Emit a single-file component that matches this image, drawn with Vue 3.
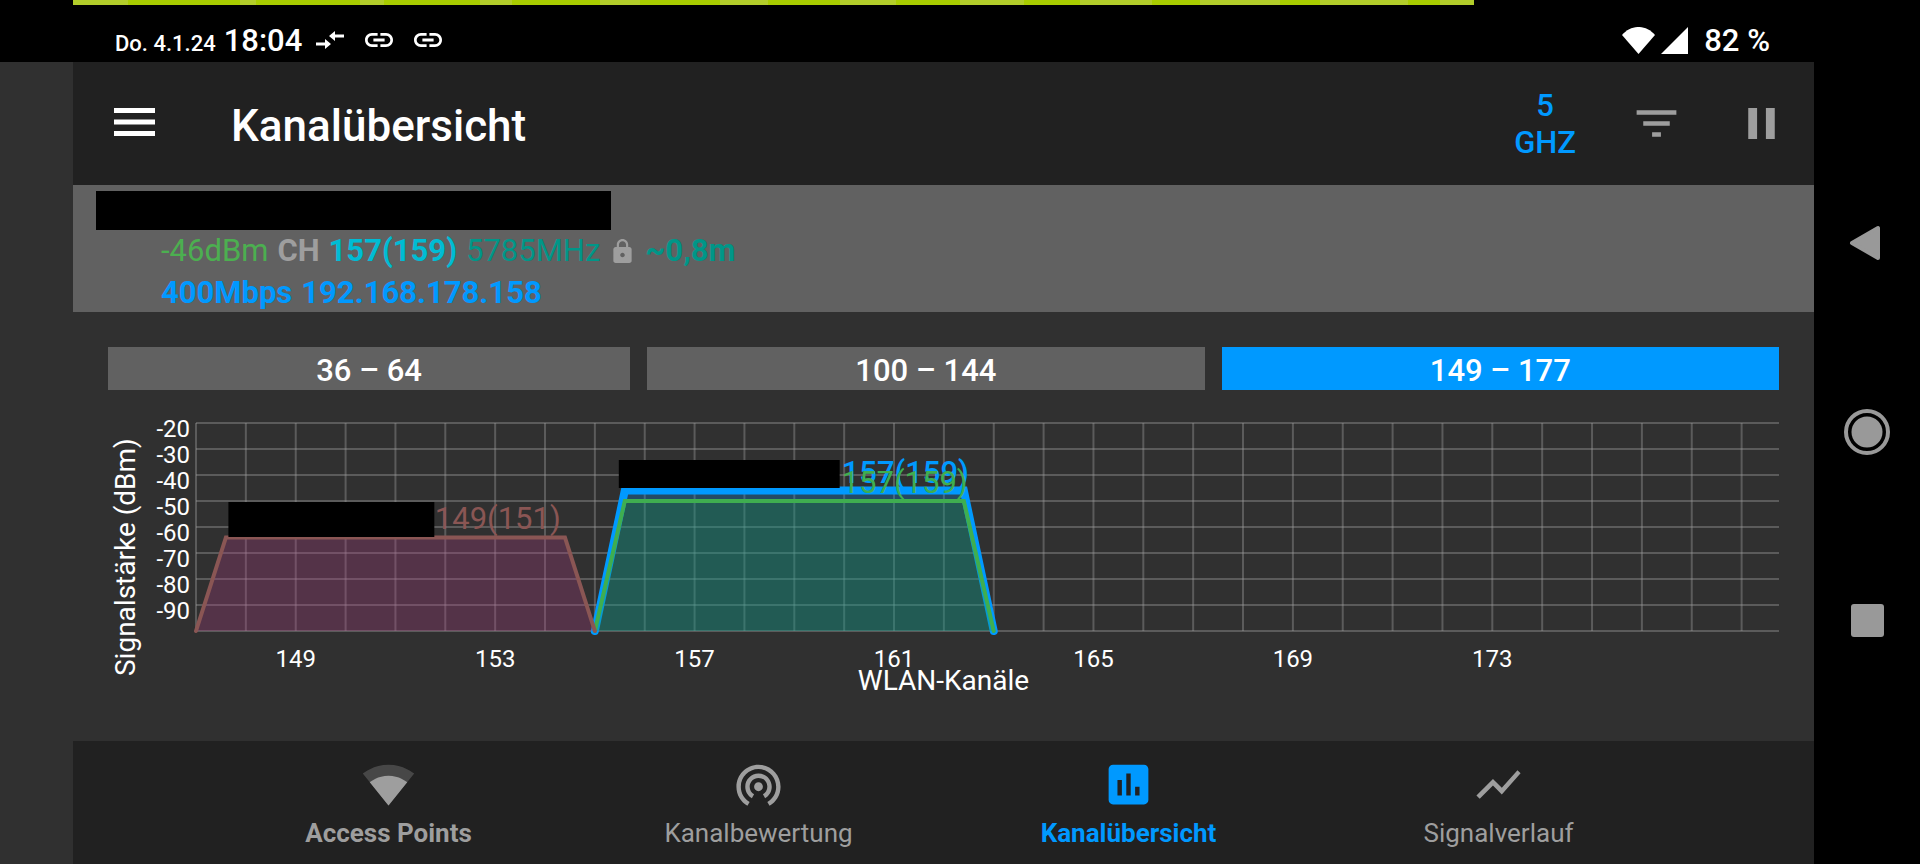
<template>
  <div class="screen">
    <div class="cutout"></div>

    <main class="app">
      <div class="progress">
        <span
          v-for="(seg, i) in progressSegments"
          :key="i"
          :class="{ light: seg.light }"
          :style="{ width: seg.width + '%' }"
        ></span>
      </div>

      <div class="status-bar">
        <span class="date">Do. 4.1.24</span>
        <span class="time">18:04</span>
        <svg class="status-icon arrows" viewBox="0 0 28 18">
          <path d="M0 11.500h9V8l6 5-6 5v-3.500H0zM28 3.500h-9V0l-6 5 6 5V6.500h9z" />
        </svg>
        <svg v-for="n in 2" :key="n" class="status-icon link" viewBox="2 7 20 10">
          <path
            d="M3.900 12c0-1.710 1.390-3.100 3.100-3.100h4V7H7c-2.760 0-5 2.240-5 5s2.240 5 5 5h4v-1.900H7c-1.710 0-3.100-1.390-3.100-3.100zM8 13h8v-2H8v2zm9-6h-4v1.900h4c1.710 0 3.100 1.390 3.100 3.100s-1.390 3.100-3.100 3.100h-4V17h4c2.760 0 5-2.240 5-5s-2.240-5-5-5z"
          />
        </svg>
        <svg class="status-icon wifi" viewBox="0 0 33 27">
          <path d="M0 8C9-2.700 24-2.700 33 8L16.500 27z" />
        </svg>
        <svg class="status-icon cell" viewBox="0 0 27 27">
          <path d="M27 0v27H0z" />
        </svg>
        <span class="battery">82 %</span>
      </div>

      <header class="toolbar">
        <button class="icon-btn" aria-label="Menü">
          <svg class="menu-icon" viewBox="0 0 41 31">
            <path d="M0 0h41v5H0zM0 11.500h41v5H0zM0 23h41v5H0z" />
          </svg>
        </button>
        <h1>Kanalübersicht</h1>
        <button class="band-btn">5<br />GHZ</button>
        <button class="icon-btn filter" aria-label="Filter">
          <svg class="icon" viewBox="0 0 24 24">
            <path d="M10 18h4v-2h-4v2zM3 6v2h18V6H3zm3 7h12v-2H6v2z" />
          </svg>
        </button>
        <button class="icon-btn" aria-label="Pause">
          <svg class="icon" viewBox="0 0 24 24">
            <path d="M6 19h4V5H6v14zm8-14v14h4V5h-4z" />
          </svg>
        </button>
      </header>

      <section class="connection">
        <div class="masked"></div>
        <p>
          <span class="level">-46dBm</span>
          <b class="muted">CH</b>
          <b class="channel">157(159)</b>
          <span class="teal">5785MHz</span>
          <svg class="lock" viewBox="4 1 16 21">
            <path
              d="M18 8h-1V6c0-2.760-2.240-5-5-5S7 3.240 7 6v2H6c-1.100 0-2 .9-2 2v10c0 1.100.9 2 2 2h12c1.100 0 2-.9 2-2V10c0-1.100-.9-2-2-2zm-6 9c-1.100 0-2-.9-2-2s.9-2 2-2 2 .9 2 2-.9 2-2 2zm3.100-9H8.900V6c0-1.710 1.390-3.100 3.100-3.100s3.100 1.390 3.100 3.100v2z"
            />
          </svg>
          <b class="teal">~0,8m</b>
        </p>
        <p class="link-info">
          <b>400Mbps</b>
          <b>192.168.178.158</b>
        </p>
      </section>

      <section class="content">
        <div class="ranges">
          <button
            v-for="range in ranges"
            :key="range"
            :class="{ active: range === selectedRange }"
            @click="selectedRange = range"
          >
            {{ range }}
          </button>
        </div>

        <div class="chart">
          <div class="y-title">Signalstärke (dBm)</div>
          <div class="y-ticks">
            <span v-for="y in yTicks" :key="y">{{ y }}</span>
          </div>
          <svg class="plot">
            <line
              v-for="y in gridRows"
              :key="'h' + y"
              class="grid"
              x1="0"
              x2="100%"
              :y1="yPx(y)"
              :y2="yPx(y)"
            />
            <line
              v-for="ch in gridColumns"
              :key="'v' + ch"
              class="grid"
              :x1="xPct(ch)"
              :x2="xPct(ch)"
              y1="0"
              :y2="plotHeight"
            />
            <svg
              class="shapes"
              width="100%"
              :height="plotHeight"
              :viewBox="`0 0 ${xMax - xMin} ${plotHeight}`"
              preserveAspectRatio="none"
            >
              <path
                v-for="s in series"
                :key="s.name"
                :d="shape(s)"
                :fill="s.fill"
                :stroke="s.color"
                :stroke-width="s.stroke"
              />
            </svg>
            <text
              v-for="s in series"
              :key="'t' + s.name"
              class="series-label"
              :class="{ strong: s.strong }"
              :x="xPct(s.labelAt)"
              :y="yPx(s.level) - 8"
              :fill="s.color"
            >
              {{ s.label }}
            </text>
            <rect
              v-for="m in masks"
              :key="m.from"
              :x="xPct(m.from)"
              :y="m.top"
              :width="(m.span / (xMax - xMin)) * 100 + '%'"
              :height="m.height"
            />
            <text v-for="ch in xTicks" :key="ch" class="x-tick" :x="xPct(ch)" y="244">
              {{ ch }}
            </text>
          </svg>
          <div class="x-title">WLAN-Kanäle</div>
        </div>
      </section>

      <nav class="bottom-nav">
        <button class="bold">
          <svg class="icon" viewBox="0 0 24 24">
            <path
              fill-opacity=".3"
              d="M12.010 21.490L23.640 7c-.45-.34-4.930-4-11.640-4C5.280 3 .81 6.660.36 7l11.630 14.490.010.010.010-.010z"
            />
            <path
              d="M3.530 10.950l8.460 10.540.010.010.010-.010 8.460-10.540C20.040 10.620 16.810 8 12 8c-4.810 0-8.040 2.620-8.470 2.950z"
            />
          </svg>
          Access Points
        </button>
        <button>
          <svg class="icon" viewBox="0 0 24 24">
            <path
              d="M12 11c-1.100 0-2 .9-2 2s.9 2 2 2 2-.9 2-2-.9-2-2-2zm6 2c0-3.310-2.690-6-6-6s-6 2.690-6 6c0 2.220 1.210 4.150 3 5.190l1-1.740c-1.190-.7-2-1.970-2-3.450 0-2.210 1.790-4 4-4s4 1.790 4 4c0 1.480-.81 2.750-2 3.450l1 1.740c1.790-1.040 3-2.970 3-5.190zM12 3C6.480 3 2 7.480 2 13c0 3.700 2.010 6.920 4.990 8.650l1-1.730C5.610 18.530 4 15.960 4 13c0-4.420 3.580-8 8-8s8 3.580 8 8c0 2.960-1.610 5.530-4 6.920l1 1.730c2.990-1.730 5-4.950 5-8.650 0-5.520-4.480-10-10-10z"
            />
          </svg>
          Kanalbewertung
        </button>
        <button class="bold active">
          <svg class="icon" viewBox="0 0 24 24">
            <path
              d="M19 3H5c-1.100 0-2 .9-2 2v14c0 1.100.9 2 2 2h14c1.100 0 2-.9 2-2V5c0-1.100-.9-2-2-2zM9 17H7v-7h2v7zm4 0h-2V7h2v10zm4 0h-2v-4h2v4z"
            />
          </svg>
          Kanalübersicht
        </button>
        <button>
          <svg class="icon" viewBox="0 0 24 24">
            <path d="M3.500 18.490l6-6.010 4 4L22 6.920l-1.410-1.410-7.090 7.970-4-4L2 16.990z" />
          </svg>
          Signalverlauf
        </button>
      </nav>
    </main>

    <aside class="system-nav">
      <button aria-label="Zurück">
        <svg viewBox="0 0 46 46">
          <path
            d="M8 23L34 8v30z"
            stroke="#999"
            stroke-width="4"
            stroke-linejoin="round"
          />
        </svg>
      </button>
      <button aria-label="Startseite">
        <svg viewBox="0 0 46 46">
          <circle cx="23" cy="23" r="15.500" />
          <circle cx="23" cy="23" r="21" fill="none" stroke="#999" stroke-width="4" />
        </svg>
      </button>
      <button aria-label="Übersicht">
        <svg viewBox="0 0 46 46">
          <rect x="7" y="6" width="33" height="33" rx="3" />
        </svg>
      </button>
    </aside>
  </div>
</template>

<script setup>
import { ref } from 'vue'

const ranges = ['36 – 64', '100 – 144', '149 – 177']
const selectedRange = ref('149 – 177')

const xMin = 147
const xMax = 178.75
const plotHeight = 208

const yTicks = [-20, -30, -40, -50, -60, -70, -80, -90]
const gridRows = [...yTicks, -100]
const gridColumns = Array.from({ length: 32 }, (_, i) => xMin + i)
const xTicks = [149, 153, 157, 161, 165, 169, 173]

const series = [
  {
    name: 'connected',
    from: 155,
    to: 163,
    level: -46,
    color: '#0099ff',
    fill: 'rgba(0, 153, 255, 0.25)',
    stroke: 8,
    label: '157(159)',
    labelAt: 159.95,
    strong: true,
  },
  {
    name: 'second',
    from: 155,
    to: 163,
    level: -50,
    color: '#3fae50',
    fill: 'rgba(30, 160, 20, 0.2)',
    stroke: 4,
    label: '157(159)',
    labelAt: 159.95,
  },
  {
    name: 'third',
    from: 147,
    to: 155,
    level: -64,
    color: '#8a5654',
    fill: 'rgba(170, 60, 130, 0.3)',
    stroke: 4,
    label: '149(151)',
    labelAt: 151.79,
  },
]

const masks = [
  { from: 147.65, span: 4.13, top: 79, height: 35 },
  { from: 155.48, span: 4.43, top: 37, height: 28 },
]

const yPx = (dbm) => (-20 - dbm) * 2.6
const xPct = (ch) => ((ch - xMin) / (xMax - xMin)) * 100 + '%'

// edges of a channel fall off over this many channels
const slope = 0.6
const shape = (s) => {
  const left = s.from - xMin
  const right = s.to - xMin
  const top = yPx(s.level)
  return `M${left} ${plotHeight}L${left + slope} ${top}H${right - slope}L${right} ${plotHeight}`
}

// light pulses get wider with every step
const progressSegments = []
const barStart = 73
const barEnd = 1474
const addSegment = (from, to, light) => {
  const width = ((Math.min(to, barEnd) - from) / (barEnd - barStart)) * 100
  progressSegments.push({ width, light })
}
addSegment(barStart, 128, true)
for (let step = 2; step <= 12; step++) {
  addSegment(128 * (step - 1), 120 * step, false)
  addSegment(120 * step, 128 * step, true)
}
</script>

<style>
body {
  margin: 0;
  background: #000;
}
</style>

<style scoped>
.screen {
  display: grid;
  grid-template-columns: 73px 1fr 106px;
  min-height: 100vh;
  background: #000;
  color: #fff;
  font-family: Roboto, 'Liberation Sans', sans-serif;
}

button {
  padding: 0;
  border: none;
  background: none;
  color: inherit;
  font-family: inherit;
  cursor: pointer;
}

svg {
  display: block;
  flex-shrink: 0;
  fill: currentColor;
}

.cutout {
  margin-top: 62px;
  background: #303030;
}

.app {
  display: flex;
  flex-direction: column;
  min-width: 0;
}

.progress {
  display: flex;
  width: 80.5%;
  height: 5px;
}

.progress span {
  background: #a8cc00;
}

.progress .light {
  background: #b2cd2a;
}

/* status bar */
.status-bar {
  display: flex;
  align-items: baseline;
  height: 57px;
  padding: 13px 44px 0 42px;
  box-sizing: border-box;
  line-height: 46px;
}

.date {
  margin-right: 8px;
  font-size: 22px;
  font-weight: 500;
}

.time {
  font-size: 31px;
  font-weight: 500;
}

.status-icon {
  align-self: center;
}

.arrows {
  width: 28px;
  height: 18px;
  margin-left: 14px;
  margin-right: 21px;
}

.link {
  width: 28px;
  height: 14px;
  margin-right: 21px;
}

.wifi {
  width: 33px;
  height: 27px;
  margin-left: auto;
}

.cell {
  width: 27px;
  height: 27px;
  margin: 0 16px 0 6px;
}

.battery {
  font-size: 31px;
  font-weight: 500;
}

/* toolbar */
.toolbar {
  display: flex;
  align-items: center;
  height: 123px;
  padding: 0 26px 0 41px;
  box-sizing: border-box;
  background: #212121;
}

.menu-icon {
  width: 41px;
  height: 31px;
}

.icon {
  width: 53px;
  height: 53px;
}

h1 {
  flex: 1;
  margin: 0 0 0 76px;
  padding-top: 4px;
  font-size: 44px;
  font-weight: 500;
  line-height: 52px;
}

.band-btn {
  color: #0099ff;
  font-size: 31px;
  font-weight: 500;
  line-height: 37px;
}

.toolbar .filter {
  margin: 0 52px 0 54px;
}

.toolbar .icon {
  color: #9e9e9e;
}

/* current connection */
.connection {
  height: 127px;
  padding: 6px 23px 0;
  box-sizing: border-box;
  background: #616161;
}

.masked {
  width: 515px;
  max-width: 100%;
  height: 39px;
  background: #000;
}

.connection p {
  display: flex;
  align-items: center;
  gap: 9px;
  margin: 0 0 0 65px;
  font-size: 31px;
  line-height: 42px;
}

.level {
  color: #4caf50;
}

.muted,
.lock {
  color: #9e9e9e;
}

.lock {
  width: 19px;
  height: 24px;
  margin: 0 4px;
}

.channel {
  color: #00bcd4;
}

.teal {
  color: #009688;
}

.connection .link-info {
  color: #0099ff;
}

/* channel ranges and chart */
.content {
  flex: 1;
  padding: 35px 35px 36px;
  background: #303030;
}

.ranges {
  display: flex;
  gap: 17px;
  margin-bottom: 26px;
}

.ranges button {
  flex: 1 1 auto;
  height: 43px;
  padding-top: 3px;
  background: #616161;
  font-size: 31px;
  font-weight: 500;
}

.ranges .active {
  background: #0099ff;
}

.chart {
  display: grid;
  grid-template-columns: 34px 48px 1fr;
}

.y-title {
  grid-column: 1;
  grid-row: 1 / 3;
  margin: 0 2px 6px 4px;
  writing-mode: vertical-rl;
  transform: rotate(180deg);
  font-size: 28px;
  line-height: 28px;
  text-align: center;
}

.y-ticks {
  display: flex;
  flex-direction: column;
  grid-column: 2;
  grid-row: 1;
  font-size: 24px;
  line-height: 26px;
  text-align: right;
}

.plot {
  grid-column: 3;
  grid-row: 1;
  width: calc(100% - 6px);
  height: 235px;
  margin: 7px 0 0 6px;
  overflow: visible;
}

.grid {
  stroke: rgba(158, 158, 158, 0.4);
  stroke-width: 2px;
}

.shapes {
  overflow: visible;
}

.shapes path {
  stroke-linecap: round;
  vector-effect: non-scaling-stroke;
}

.series-label {
  font-size: 31px;
}

.strong {
  font-weight: 500;
}

.plot rect {
  fill: #000;
}

.x-tick {
  font-size: 24px;
  text-anchor: middle;
}

.x-title {
  grid-column: 1 / 4;
  grid-row: 2;
  font-size: 28px;
  line-height: 46px;
  text-align: center;
}

/* bottom navigation */
.bottom-nav {
  display: flex;
  justify-content: center;
  height: 123px;
  background: #212121;
}

.bottom-nav button {
  display: flex;
  flex: 0 1 370px;
  flex-direction: column;
  align-items: center;
  padding-top: 17px;
  color: #9e9e9e;
  font-size: 26px;
  line-height: 44px;
}

.bottom-nav .bold {
  font-weight: 700;
}

.bottom-nav .active {
  color: #0099ff;
}

/* system buttons on the right edge */
.system-nav {
  display: flex;
  flex-direction: column;
  align-items: center;
  justify-content: center;
  gap: 143px;
  background: #000;
}

.system-nav svg {
  width: 46px;
  height: 46px;
  color: #999;
}
</style>
